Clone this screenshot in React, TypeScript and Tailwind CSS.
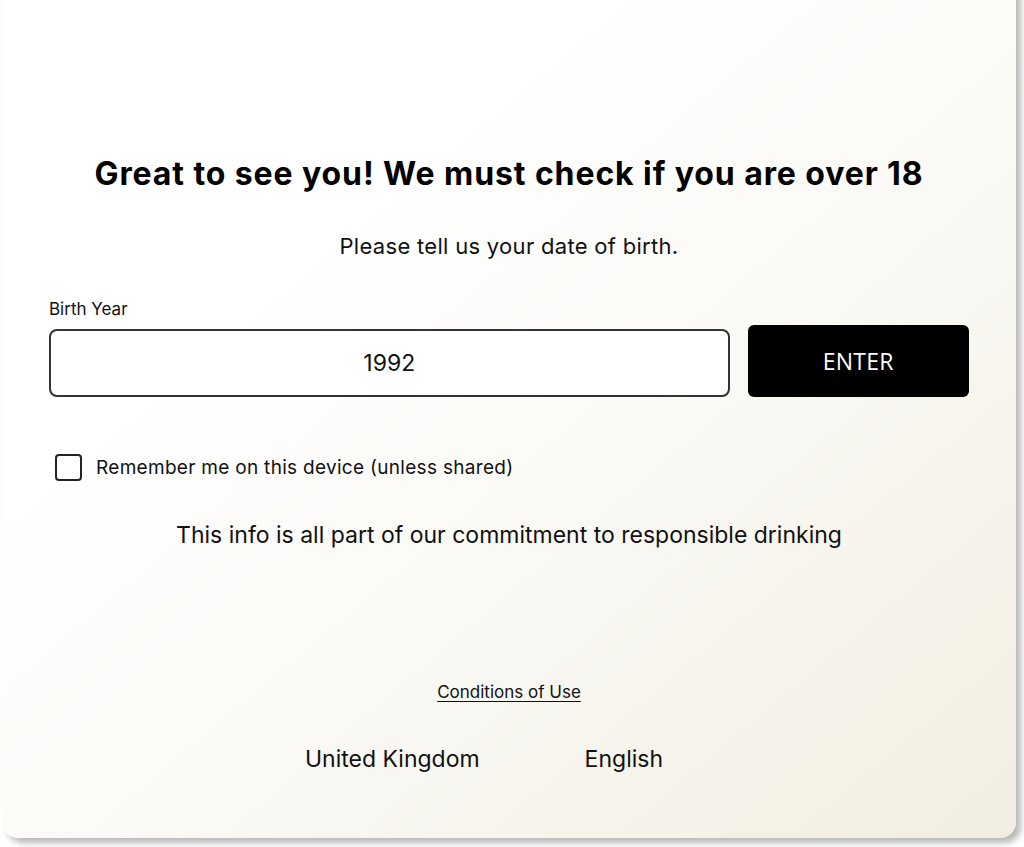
import React, { useState } from 'react';

export default function App() {
    const [year, setYear] = useState('1992');
    const [remember, setRemember] = useState(false);

    return (
        <div className="w-[1024px] h-[847px] bg-white overflow-hidden font-['Inter',sans-serif] text-[#111]">
            {/* Card */}
            <div className="ml-[2px] mt-[-20px] w-[1014px] h-[858px] rounded-[16px] bg-gradient-to-br from-white from-30% via-[#fbfaf6] via-55% to-[#f1ede1] shadow-[5px_5px_6px_rgba(0,0,0,0.28)] px-[47px] pt-[174px] flex flex-col">
                {/* Header */}
                <h1 className="text-center text-[32px] leading-[40px] font-bold tracking-[0.9px] text-black">
                    Great to see you! We must check if you are over 18
                </h1>
                <p className="text-center text-[22px] leading-[28px] mt-[38px] tracking-[0.3px]">
                    Please tell us your date of birth.
                </p>

                {/* Year form */}
                <label className="mt-[39px] text-[17px] leading-[20px] text-[#111]">Birth Year</label>
                <div className="mt-[6px] flex items-end gap-[18px]">
                    <input
                        value={year}
                        onChange={(e) => setYear(e.target.value)}
                        className="w-[682px] h-[68px] border-2 border-[#333] rounded-[8px] bg-white text-center text-[23px] outline-none font-['Inter',sans-serif]"
                    />
                    <button className="w-[222px] h-[72px] bg-black text-white rounded-[6px] text-[23px] tracking-[0.3px] font-['Open_Sans',sans-serif]">
                        ENTER
                    </button>
                </div>

                {/* Remember */}
                <div className="mt-[57px] ml-[6px] flex items-center gap-[14px]">
                    <button
                        onClick={() => setRemember(!remember)}
                        className="w-[27px] h-[27px] border-2 border-[#222] rounded-[4px] bg-white"
                    />
                    <span className="text-[19px] leading-[24px] tracking-[0.3px]">Remember me on this device (unless shared)</span>
                </div>

                <p className="text-center text-[23px] leading-[30px] mt-[39px]">
                    This info is all part of our commitment to responsible drinking
                </p>

                {/* Footer */}
                <a className="self-center mt-[132px] text-[17px] leading-[20px] underline underline-offset-[3px]">
                    Conditions of Use
                </a>
                <div className="mt-[42px] flex justify-center gap-[105px] text-[23px] leading-[30px] ml-[-50px]">
                    <span>United Kingdom</span>
                    <span>English</span>
                </div>
            </div>
        </div>
    );
}
